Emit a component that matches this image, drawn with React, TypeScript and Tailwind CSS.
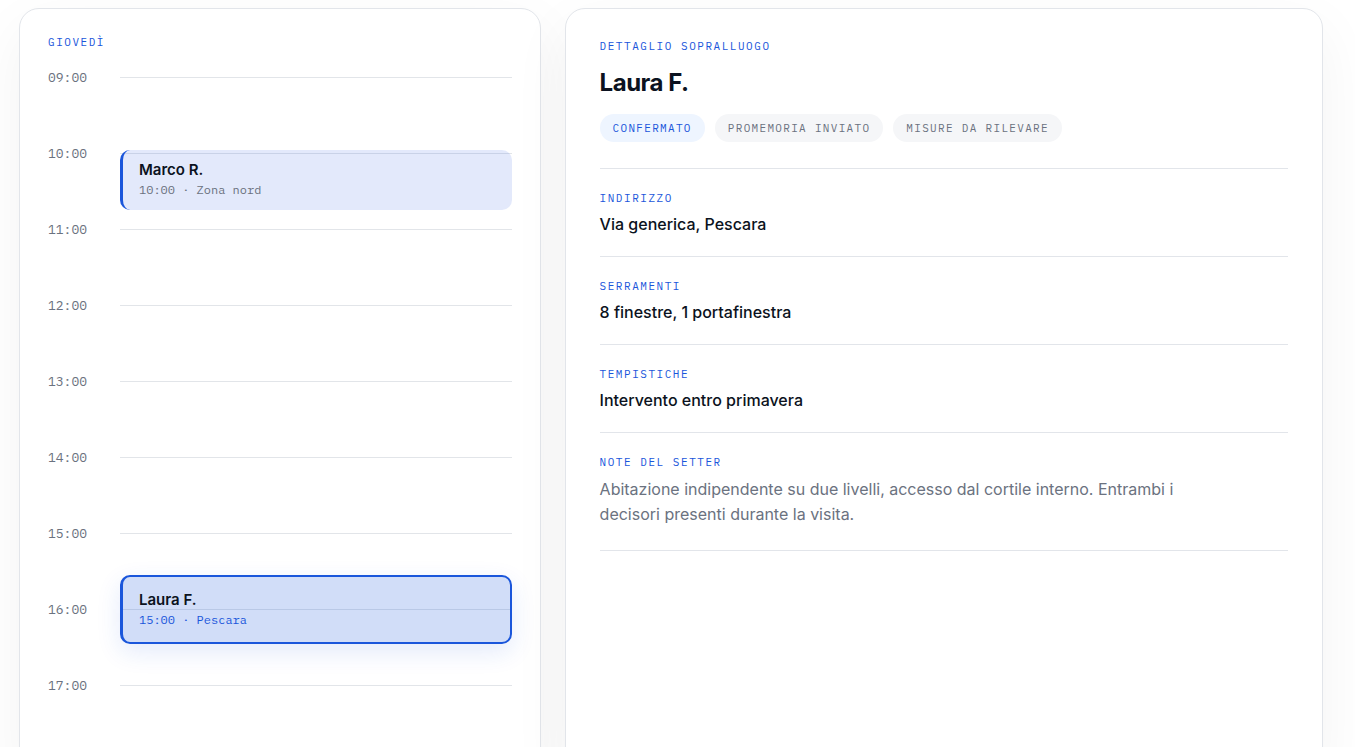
import clsx from 'clsx';

type Appointment = {
  name: string;
  meta: string;
  top: number;
  height: number;
  active?: boolean;
};

const HOURS = [
  '09:00',
  '10:00',
  '11:00',
  '12:00',
  '13:00',
  '14:00',
  '15:00',
  '16:00',
  '17:00',
];

// top and height are px inside the timeline, one hour is 76px
const APPOINTMENTS: Appointment[] = [
  { name: 'Marco R.', meta: '10:00 · Zona nord', top: 80, height: 60 },
  { name: 'Laura F.', meta: '15:00 · Pescara', top: 505, height: 69, active: true },
];

const CHIPS = [
  { text: 'CONFERMATO', on: true },
  { text: 'PROMEMORIA INVIATO', on: false },
  { text: 'MISURE DA RILEVARE', on: false },
];

const DETAILS = [
  { label: 'INDIRIZZO', value: 'Via generica, Pescara' },
  { label: 'SERRAMENTI', value: '8 finestre, 1 portafinestra' },
  { label: 'TEMPISTICHE', value: 'Intervento entro primavera' },
];

const MONO = "font-['IBM_Plex_Mono','Liberation_Mono',monospace]";
const LABEL = `${MONO} text-[11px] leading-[18px] tracking-[0.14em] text-[#1a56db]`;
const CARD =
  'rounded-[20px] border border-[#e2e5ea] bg-white shadow-[0_20px_60px_rgba(0,0,0,0.05)]';

function DayTimeline() {
  return (
    <section className={clsx(CARD, 'px-7 pt-6 pb-20')}>
      <h2 className={clsx(LABEL, 'mb-[19px]')}>GIOVEDÌ</h2>
      <div className="relative">
        <ol className="flex flex-col gap-[61px]">
          {HOURS.map((hour) => (
            <li key={hour} className="flex h-[15px] items-center">
              <span
                className={clsx(MONO, 'w-18 text-[13px] leading-[15px] text-[#6b7280]')}
              >
                {hour}
              </span>
              <span className="h-px flex-1 bg-[#e2e5e9]" />
            </li>
          ))}
        </ol>
        {APPOINTMENTS.map((a) => (
          <button
            key={a.name}
            type="button"
            style={{ top: a.top, height: a.height }}
            className={clsx(
              'absolute right-0 left-18 flex flex-col justify-center rounded-[10px] border-[#1a56db] px-4 text-left',
              a.active
                ? 'border-2 border-l-3 bg-[#1a56db]/20 shadow-[0_8px_24px_rgba(26,86,219,0.12)]'
                : 'border-l-3 bg-[#1a46e0]/12',
            )}
          >
            <span className="text-[15px] leading-5 font-semibold text-[#0b1220]">
              {a.name}
            </span>
            <span
              className={clsx(
                MONO,
                'text-xs leading-5',
                a.active ? 'text-[#1a56db]' : 'text-[#6b7280]',
              )}
            >
              {a.meta}
            </span>
          </button>
        ))}
      </div>
    </section>
  );
}

function VisitDetail() {
  return (
    <section className={clsx(CARD, 'px-[34px] pt-7 pb-8')}>
      <p className={LABEL}>DETTAGLIO SOPRALLUOGO</p>
      <h1 className="mt-3 text-2xl leading-8 font-bold tracking-[-0.02em] text-[#0b1220]">
        Laura F.
      </h1>
      <ul className="mt-[15px] flex flex-wrap gap-[10px]">
        {CHIPS.map((chip) => (
          <li
            key={chip.text}
            className={clsx(
              MONO,
              'rounded-full px-[13px] text-[11px] leading-7 tracking-[0.12em]',
              chip.on ? 'bg-[#eef5ff] text-[#1a56db]' : 'bg-[#f5f6f8] text-[#6b7280]',
            )}
          >
            {chip.text}
          </li>
        ))}
      </ul>
      <dl className="mt-[26px] border-t border-[#e2e5ea]">
        {DETAILS.map((d) => (
          <div key={d.label} className="border-b border-[#e2e5ea] py-5">
            <dt className={LABEL}>{d.label}</dt>
            <dd className="mt-[5px] text-base font-medium text-[#0b1220]">
              {d.value}
            </dd>
          </div>
        ))}
        <div className="border-b border-[#e2e5ea] pt-5 pb-[23px]">
          <dt className={LABEL}>NOTE DEL SETTER</dt>
          <dd className="mt-[6px] max-w-[600px] text-base leading-[25px] text-[#6b7280]">
            Abitazione indipendente su due livelli, accesso dal cortile interno.
            Entrambi i decisori presenti durante la visita.
          </dd>
        </div>
      </dl>
    </section>
  );
}

export default function App() {
  return (
    <main className="grid grid-cols-[1fr_1.454fr] gap-6 bg-white pt-2 pr-8 pb-10 pl-[19px] font-['Inter',sans-serif]">
      <DayTimeline />
      <VisitDetail />
    </main>
  );
}
